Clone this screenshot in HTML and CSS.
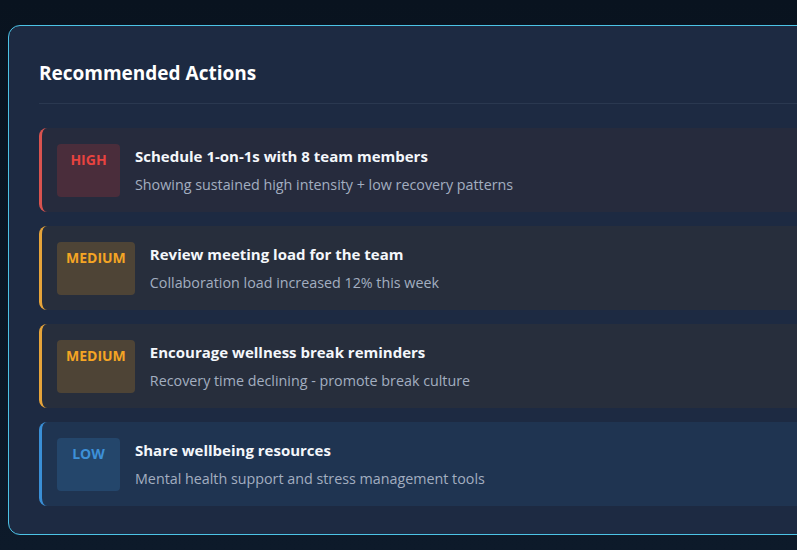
FILE: index.html
```html
<!DOCTYPE html>
<html lang="en">
<head>
<meta charset="utf-8">
<title>Recommended Actions</title>
<link rel="stylesheet" href="styles.css">
</head>
<body>
<section class="card">
  <h2 class="card-title">Recommended Actions</h2>
  <ul class="actions">
    <li class="action action-high">
      <span class="badge">High</span>
      <div class="action-body">
        <div class="action-title">Schedule 1-on-1s with 8 team members</div>
        <div class="action-desc">Showing sustained high intensity + low recovery patterns</div>
      </div>
    </li>
    <li class="action action-medium">
      <span class="badge">Medium</span>
      <div class="action-body">
        <div class="action-title">Review meeting load for the team</div>
        <div class="action-desc">Collaboration load increased 12% this week</div>
      </div>
    </li>
    <li class="action action-medium">
      <span class="badge">Medium</span>
      <div class="action-body">
        <div class="action-title">Encourage wellness break reminders</div>
        <div class="action-desc">Recovery time declining - promote break culture</div>
      </div>
    </li>
    <li class="action action-low">
      <span class="badge">Low</span>
      <div class="action-body">
        <div class="action-title">Share wellbeing resources</div>
        <div class="action-desc">Mental health support and stress management tools</div>
      </div>
    </li>
  </ul>
</section>
</body>
</html>
```

FILE: styles.css
```css
html, body {
  margin: 0;
  height: 100%;
}
body {
  background: linear-gradient(180deg, #09131f 0%, #0d1a2a 100%);
  padding: 25px 0 0 8px;
  box-sizing: border-box;
  overflow: hidden;
  font-family: "Open Sans", "Noto Sans", sans-serif;
}
.card {
  width: 900px;
  box-sizing: border-box;
  background: #1d2a42;
  border: 1px solid #4cc3e6;
  border-radius: 12px;
  padding: 31px 30px 28px 30px;
}
.card-title {
  margin: 0;
  font-size: 19px;
  line-height: 32px;
  font-weight: 700;
  color: #ffffff;
  padding-bottom: 14px;
  border-bottom: 1px solid #2a3850;
  margin-bottom: 24px;
}
.actions {
  list-style: none;
  margin: 0;
  padding: 0;
  display: flex;
  flex-direction: column;
  gap: 14px;
}
.action {
  display: flex;
  align-items: stretch;
  gap: 15px;
  padding: 16px 16px 15px 15px;
  border-left: 3px solid;
  border-radius: 8px;
}
.action-high {
  border-left-color: #d9534f;
  background: #262b3d;
}
.action-medium {
  border-left-color: #e6a43a;
  background: #272e3c;
}
.action-low {
  border-left-color: #3a8fd6;
  background: #1f3451;
}
.badge {
  display: block;
  box-sizing: border-box;
  min-width: 63px;
  text-align: center;
  border-radius: 4px;
  padding: 6px 9px 0;
  font-size: 14px;
  line-height: 20px;
  font-weight: 700;
  text-transform: uppercase;
}
.action-high .badge {
  color: #e8433f;
  background: #4a2d3b;
}
.action-medium .badge {
  color: #f5a524;
  background: #4e4436;
}
.action-low .badge {
  color: #3d90d8;
  background: #24466b;
}
.action-body {
  display: flex;
  flex-direction: column;
  gap: 5px;
}
.action-title {
  font-size: 15px;
  line-height: 24px;
  font-weight: 700;
  color: #f4f7fb;
}
.action-desc {
  font-size: 14.3px;
  line-height: 24px;
  color: #a3aec0;
}
```
